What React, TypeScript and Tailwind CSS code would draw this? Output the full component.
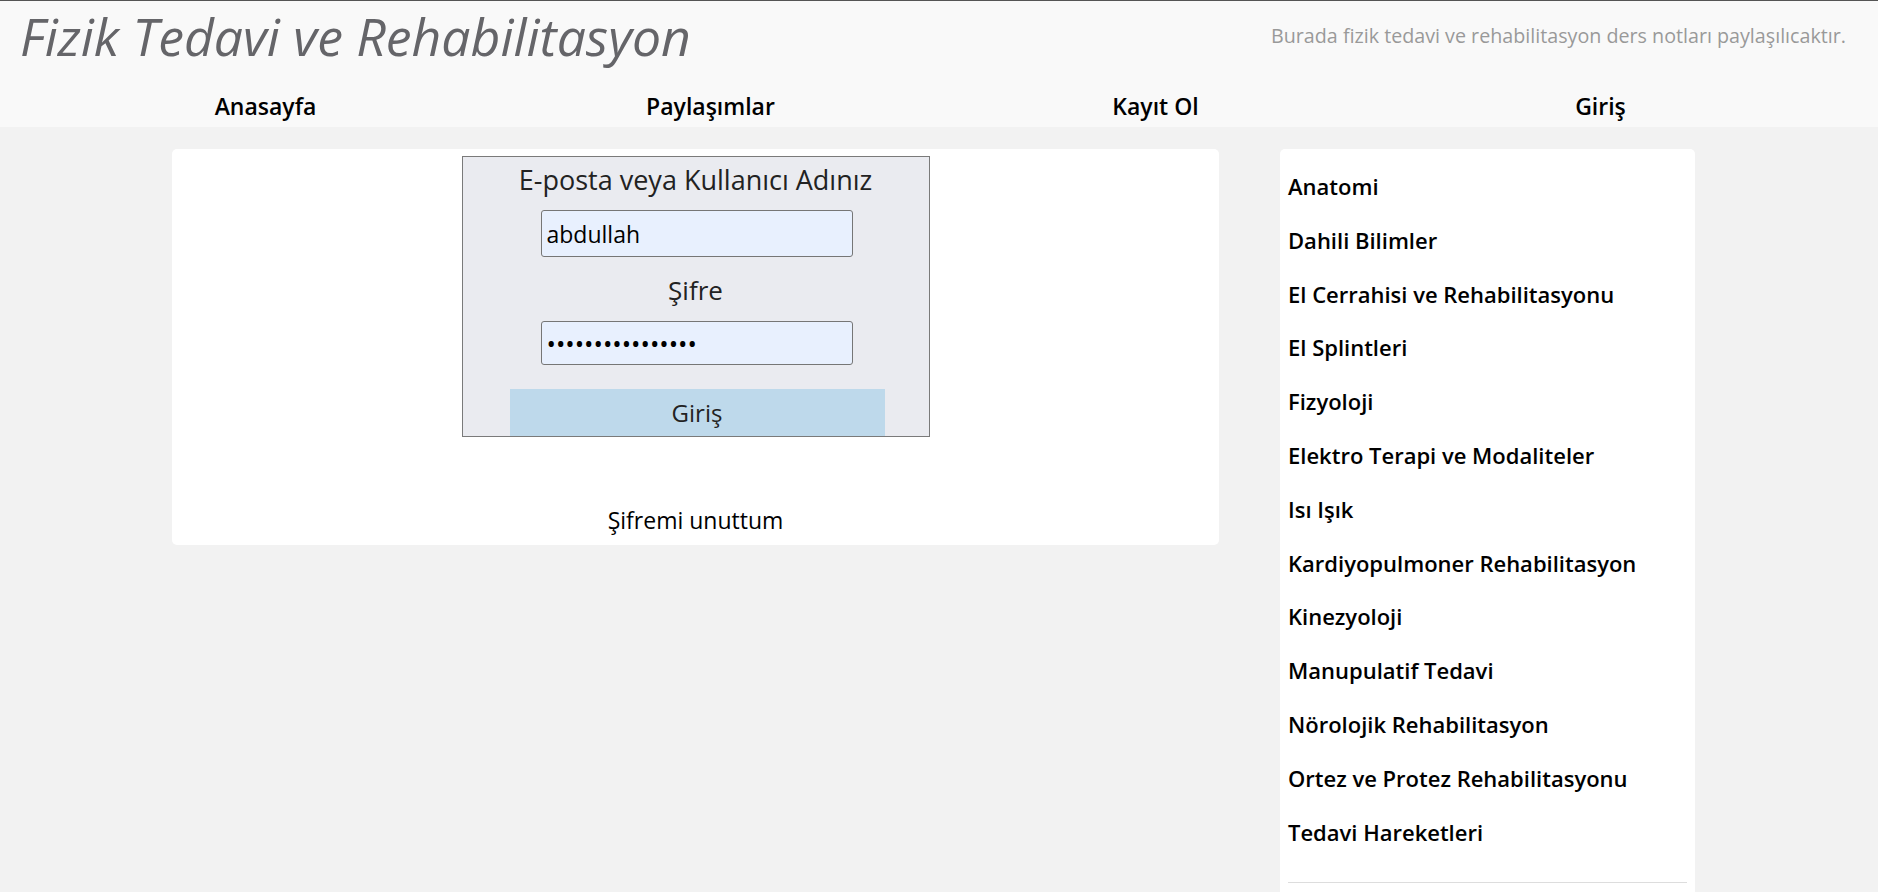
const navItems = ["Anasayfa", "Paylaşımlar", "Kayıt Ol", "Giriş"];

const categories = [
  "Anatomi",
  "Dahili Bilimler",
  "El Cerrahisi ve Rehabilitasyonu",
  "El Splintleri",
  "Fizyoloji",
  "Elektro Terapi ve Modaliteler",
  "Isı Işık",
  "Kardiyopulmoner Rehabilitasyon",
  "Kinezyoloji",
  "Manupulatif Tedavi",
  "Nörolojik Rehabilitasyon",
  "Ortez ve Protez Rehabilitasyonu",
  "Tedavi Hareketleri",
];

const font = "font-['Open_Sans',_'Noto_Sans',_sans-serif]";

const App = () => {
  return (
    <div className={`min-h-screen bg-[#f2f2f2] border-t border-[#555] ${font}`}>
      {/* Header */}
      <header className="bg-[#f9f9f9]">
        <div className="h-[90px] flex justify-between items-start">
          <h1 className="mt-[9px] ml-[20px] text-[51.7px] leading-[52px] italic text-[#656569]">
            Fizik Tedavi ve Rehabilitasyon
          </h1>
          <p className="mt-[23px] mr-[32px] text-[19.7px] leading-[24px] text-[#999]">
            Burada fizik tedavi ve rehabilitasyon ders notları paylaşılıcaktır.
          </p>
        </div>
        <nav className="h-[36px] pl-[43px] grid grid-cols-[repeat(4,445px)]">
          {navItems.map((item) => (
            <a key={item} className="text-center text-[23px] leading-[30px] font-semibold text-black cursor-pointer">
              {item}
            </a>
          ))}
        </nav>
      </header>

      {/* Main */}
      <main className="mt-[22px] pl-[172px] flex items-start gap-[61px]">
        <section className="w-[1047px] bg-white rounded-[5px] pt-[7px] pb-[10px] flex flex-col items-center">
          <form className="w-[468px] h-[281px] border border-[#7a7a7a] bg-[#eaebf0] flex flex-col items-center overflow-hidden">
            <label className="mt-[8px] text-[27px] leading-[30px] text-[#222]">
              E-posta veya Kullanıcı Adınız
            </label>
            <input
              type="text"
              defaultValue="abdullah"
              className="mt-[15px] ml-[2px] w-[312px] h-[47px] shrink-0 px-[5px] bg-[#e8f0fe] border border-[#767676] rounded-[3px] text-[23px] text-black outline-none"
            />
            <label className="mt-[18px] text-[26px] leading-[30px] text-[#222]">Şifre</label>
            <input
              type="password"
              defaultValue="abdullah12345678"
              className="mt-[16px] ml-[2px] w-[312px] h-[44px] shrink-0 px-[5px] bg-[#e8f0fe] border border-[#767676] rounded-[3px] text-[25px] text-black outline-none"
            />
            <button
              type="button"
              className="mt-[24px] ml-[3px] w-[375px] h-[48px] shrink-0 bg-[#bed9eb] text-[24px] text-[#222]"
            >
              Giriş
            </button>
          </form>
          <a className="mt-[68px] text-[23px] leading-[30px] text-black cursor-pointer">Şifremi unuttum</a>
        </section>

        <aside className="w-[415px] bg-white rounded-[5px] pt-[11px] pb-[30px]">
          <ul>
            {categories.map((c) => (
              <li key={c} className="px-[8px] text-[22px] leading-[53.8px] font-semibold text-black">
                {c}
              </li>
            ))}
          </ul>
          <div className="mx-[8px] mt-[23px] border-t border-[#ddd]" />
        </aside>
      </main>
    </div>
  );
};

export default App;
